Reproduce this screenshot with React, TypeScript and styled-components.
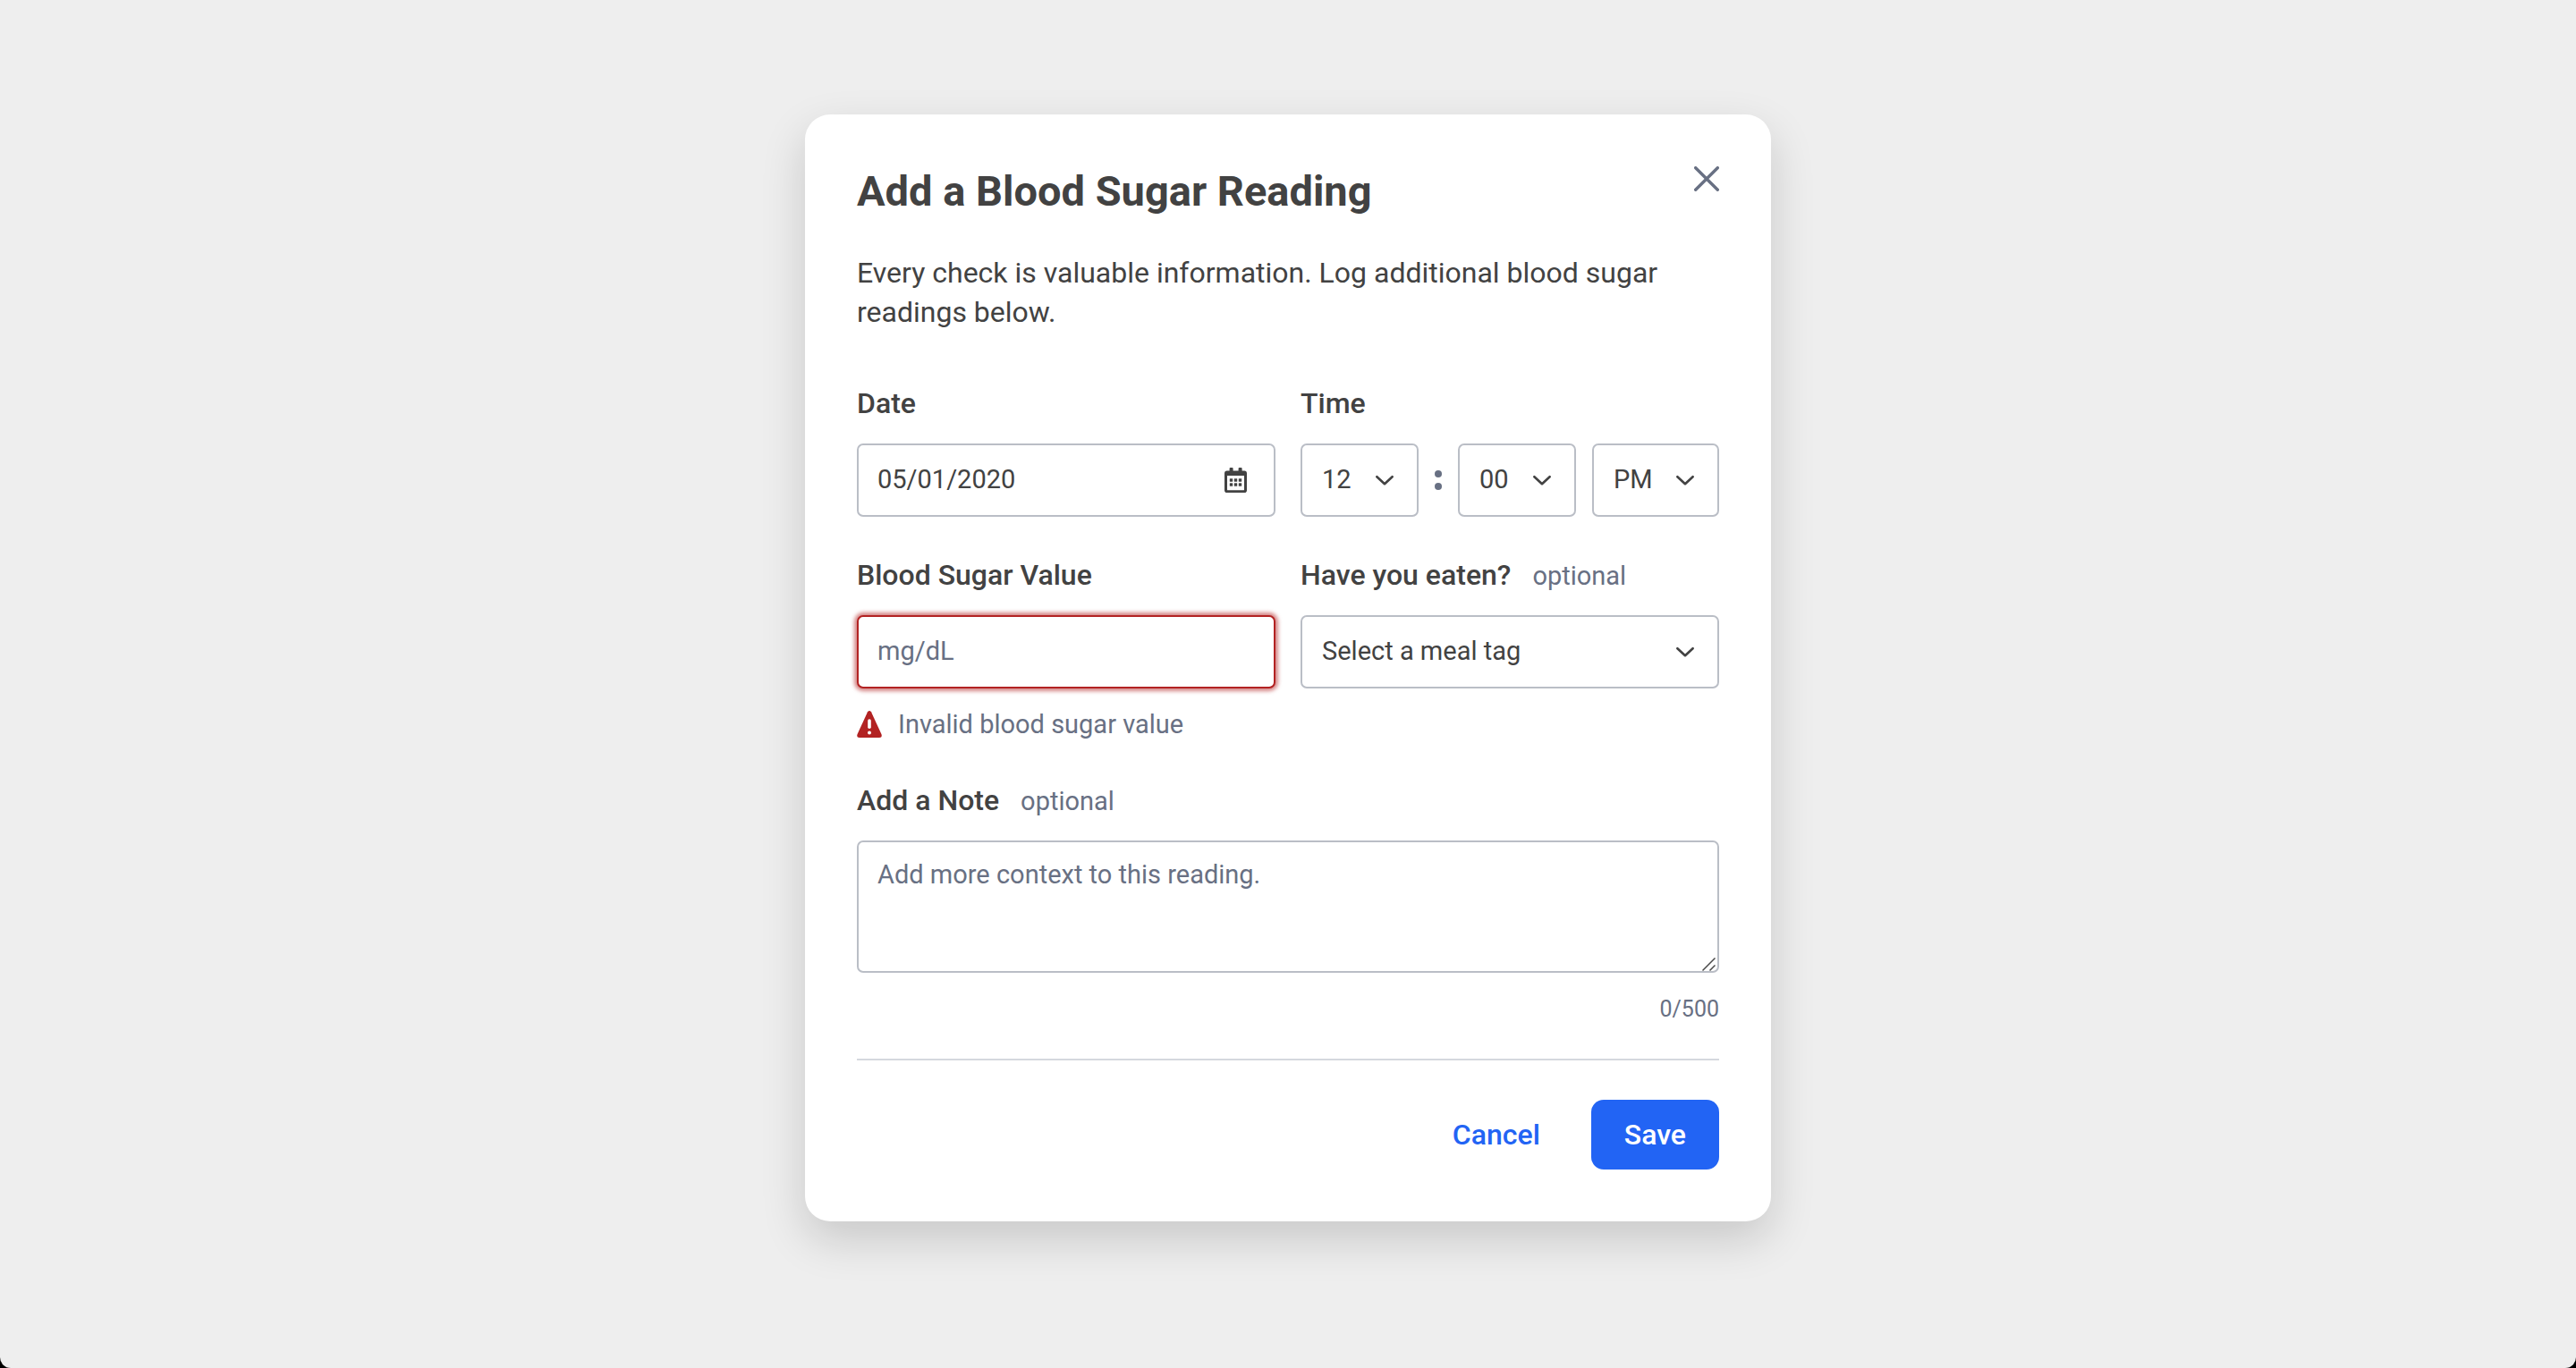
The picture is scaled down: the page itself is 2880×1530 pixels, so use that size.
import React, { useState } from "react";
import styled, { createGlobalStyle } from "styled-components";

const color = {
  text: "#424242",
  muted: "#687083",
  border: "#babec6",
  divider: "#d5d8de",
  error: "#b22222",
  primary: "#2264f4",
};

const GlobalStyle = createGlobalStyle`
  *, *::before, *::after { box-sizing: border-box; }
  html { background: #000; }
  body { margin: 0; }
  body, button, input, select, textarea {
    font-family: Roboto, "Liberation Sans", sans-serif;
    color: ${color.text};
  }
`;

const Page = styled.main`
  display: flex;
  justify-content: center;
  align-items: flex-start;
  min-height: 100vh;
  padding: 128px 24px;
  background: #eeeeee;
  border-radius: 0 0 12px 12px;
`;

const Dialog = styled.form`
  width: 100%;
  max-width: 1080px;
  padding: 58px;
  border-radius: 28px;
  background: #fff;
  box-shadow: 0 20px 50px rgba(0, 0, 0, 0.16);
`;

const Header = styled.header`
  display: flex;
  justify-content: space-between;
  align-items: flex-start;
`;

const Title = styled.h1`
  margin: 0;
  font-size: 47px;
  line-height: 56px;
  font-weight: 700;
`;

const CloseButton = styled.button`
  display: flex;
  padding: 0;
  border: 0;
  background: none;
  color: ${color.muted};
  cursor: pointer;
`;

const Intro = styled.p`
  margin: 41px 0 60px;
  font-size: 32px;
  line-height: 44px;
`;

const Fields = styled.div`
  display: grid;
  grid-template-columns: 1fr 1fr;
  gap: 45px 28px;
`;

const Field = styled.div<{ $wide?: boolean }>`
  min-width: 0;
  grid-column: ${(p) => (p.$wide ? "1 / -1" : "auto")};
`;

const LabelRow = styled.div`
  display: flex;
  align-items: baseline;
  gap: 24px;
  margin-bottom: 25px;
  line-height: 40px;
`;

const Label = styled.label`
  font-size: 32px;
  font-weight: 500;
`;

const Optional = styled.span`
  font-size: 29px;
  line-height: 32px;
  color: ${color.muted};
`;

const Control = styled.div`
  position: relative;
  display: flex;
`;

const boxed = `
  width: 100%;
  margin: 0;
  border: 2px solid ${color.border};
  border-radius: 7px;
  background: #fff;
  font-size: 29px;
  line-height: 40px;
  outline: none;
  &::placeholder { color: ${color.muted}; opacity: 1; }
`;

const Input = styled.input<{ $invalid?: boolean }>`
  ${boxed}
  height: 82px;
  padding: 0 21px 2px;
  ${(p) =>
    p.$invalid &&
    `border-color: ${color.error}; box-shadow: 0 0 4px 3px rgba(178, 34, 34, 0.55);`}
`;

const Select = styled.select`
  ${boxed}
  height: 82px;
  padding: 0 22px 2px;
  appearance: none;
`;

const TextArea = styled.textarea`
  ${boxed}
  display: block;
  height: 148px;
  padding: 16px 21px;
  resize: vertical;
  &::-webkit-resizer { display: none; }
`;

const Adornment = styled.span<{ $right: number }>`
  position: absolute;
  top: 0;
  bottom: 0;
  right: ${(p) => p.$right}px;
  display: flex;
  align-items: center;
  pointer-events: none;
`;

const Grip = styled.svg`
  position: absolute;
  right: 4px;
  bottom: 2px;
  pointer-events: none;
`;

const TimeRow = styled.div`
  display: grid;
  grid-template-columns: 132fr 44px 132fr 18px 142fr;
`;

const Colon = styled.span`
  display: flex;
  flex-direction: column;
  align-items: center;
  justify-content: center;
  gap: 6px;
  &::before, &::after {
    content: "";
    width: 8px;
    height: 8px;
    border-radius: 50%;
    background: ${color.muted};
  }
`;

const ErrorText = styled.div`
  display: flex;
  align-items: center;
  gap: 18px;
  margin-top: 20px;
  font-size: 29px;
  line-height: 40px;
  color: ${color.muted};
`;

const Counter = styled.div`
  margin-top: 25px;
  text-align: right;
  font-size: 25px;
  line-height: 32px;
  color: ${color.muted};
`;

const Footer = styled.footer`
  display: flex;
  justify-content: flex-end;
  gap: 20px;
  margin-top: 39px;
  padding-top: 44px;
  border-top: 2px solid ${color.divider};
`;

const Button = styled.button<{ $primary?: boolean }>`
  height: 78px;
  padding: 0 37px;
  border: 0;
  border-radius: 14px;
  font-size: 32px;
  font-weight: 500;
  cursor: pointer;
  color: ${(p) => (p.$primary ? "#fff" : color.primary)};
  background: ${(p) => (p.$primary ? color.primary : "transparent")};
`;

const CloseIcon = () => (
  <svg width="28" height="28" viewBox="0 0 28 28" fill="none" stroke="currentColor" strokeWidth="3.4" strokeLinecap="round" aria-hidden="true">
    <path d="M1.7 1.7 26.3 26.3M26.3 1.7 1.7 26.3" />
  </svg>
);

const Chevron = () => (
  <svg width="20" height="12" viewBox="0 0 20 12" fill="none" stroke={color.text} strokeWidth="2.6" strokeLinecap="round" strokeLinejoin="round" aria-hidden="true">
    <path d="M1.4 2.2 10 10.2 18.6 2.2" />
  </svg>
);

const CalendarIcon = () => (
  <svg width="25" height="28" viewBox="0 0 25 28" fill={color.text} aria-hidden="true">
    <path fillRule="evenodd" d="M5.6 3.4V1q0-1 1-1h2q1 0 1 1v2.4h6V1q0-1 1-1h2q1 0 1 1v2.4h2.6Q25 3.4 25 6.4v18.8Q25 28 22.2 28H2.8Q0 28 0 25.200V6.400Q0 3.400 2.800 3.400zM3 9v15.400q0 .900.900.900h17.200q.900 0 .900-.900V9z" />
    <path d="M6 12.500h3v3H6zM11 12.500h3v3h-3zM16 12.500h3v3h-3zM6 17.600h3v3H6zM11 17.600h3v3h-3zM16 17.600h3v3h-3z" stroke={color.text} strokeWidth=".4" strokeLinejoin="round" />
  </svg>
);

const WarningIcon = () => (
  <svg width="28" height="30" viewBox="0 0 28 30" aria-hidden="true">
    <path d="M12 1.300q2-2.600 4 0L27.500 26.300Q28.600 30 25 30H3Q-.6 30 .5 26.300z" fill={color.error} />
    <path d="M14 11v7.300" stroke="#fff" strokeWidth="3.600" strokeLinecap="round" />
    <circle cx="14" cy="24.400" r="2" fill="#fff" />
  </svg>
);

type PickerProps = { id: string; label?: string; value: string; options: string[]; onChange: (v: string) => void };

const Picker = ({ id, label, value, options, onChange }: PickerProps) => (
  <Control>
    <Select id={id} aria-label={label} value={value} onChange={(e) => onChange(e.target.value)}>
      {options.map((o) => (
        <option key={o}>{o}</option>
      ))}
    </Select>
    <Adornment $right={28}>
      <Chevron />
    </Adornment>
  </Control>
);

const hours = Array.from({ length: 12 }, (_, i) => String(i + 1));
const minutes = Array.from({ length: 60 }, (_, i) => String(i).padStart(2, "0"));
const meals = ["Select a meal tag", "Before meal", "After meal"];

export default function App() {
  const [date, setDate] = useState("05/01/2020");
  const [hour, setHour] = useState("12");
  const [minute, setMinute] = useState("00");
  const [period, setPeriod] = useState("PM");
  const [value, setValue] = useState("");
  const [meal, setMeal] = useState(meals[0]);
  const [note, setNote] = useState("");

  return (
    <>
      <GlobalStyle />
      <Page>
        <Dialog role="dialog" aria-labelledby="title" noValidate onSubmit={(e) => e.preventDefault()}>
          <Header>
            <Title id="title">Add a Blood Sugar Reading</Title>
            <CloseButton type="button" aria-label="Close">
              <CloseIcon />
            </CloseButton>
          </Header>
          <Intro>Every check is valuable information. Log additional blood sugar readings below.</Intro>
          <Fields>
            <Field>
              <LabelRow>
                <Label htmlFor="date">Date</Label>
              </LabelRow>
              <Control>
                <Input id="date" value={date} onChange={(e) => setDate(e.target.value)} />
                <Adornment $right={32}>
                  <CalendarIcon />
                </Adornment>
              </Control>
            </Field>
            <Field>
              <LabelRow>
                <Label htmlFor="hour">Time</Label>
              </LabelRow>
              <TimeRow>
                <Picker id="hour" value={hour} options={hours} onChange={setHour} />
                <Colon />
                <Picker id="minute" label="Minute" value={minute} options={minutes} onChange={setMinute} />
                <span />
                <Picker id="period" label="AM or PM" value={period} options={["AM", "PM"]} onChange={setPeriod} />
              </TimeRow>
            </Field>
            <Field>
              <LabelRow>
                <Label htmlFor="value">Blood Sugar Value</Label>
              </LabelRow>
              <Control>
                <Input
                  id="value"
                  $invalid
                  aria-invalid="true"
                  aria-describedby="value-error"
                  placeholder="mg/dL"
                  value={value}
                  onChange={(e) => setValue(e.target.value)}
                />
              </Control>
              <ErrorText id="value-error">
                <WarningIcon />
                Invalid blood sugar value
              </ErrorText>
            </Field>
            <Field>
              <LabelRow>
                <Label htmlFor="meal">Have you eaten?</Label>
                <Optional>optional</Optional>
              </LabelRow>
              <Picker id="meal" value={meal} options={meals} onChange={setMeal} />
            </Field>
            <Field $wide>
              <LabelRow>
                <Label htmlFor="note">Add a Note</Label>
                <Optional>optional</Optional>
              </LabelRow>
              <Control>
                <TextArea
                  id="note"
                  maxLength={500}
                  placeholder="Add more context to this reading."
                  value={note}
                  onChange={(e) => setNote(e.target.value)}
                />
                <Grip width="15" height="15" viewBox="0 0 15 15" stroke="#4a4a4a" strokeWidth="1.5" aria-hidden="true">
                  <path d="M.5 14.500 14.500.5M8.500 14.500l6-6" />
                </Grip>
              </Control>
              <Counter>{note.length}/500</Counter>
            </Field>
          </Fields>
          <Footer>
            <Button type="button">Cancel</Button>
            <Button type="submit" $primary>
              Save
            </Button>
          </Footer>
        </Dialog>
      </Page>
    </>
  );
}
